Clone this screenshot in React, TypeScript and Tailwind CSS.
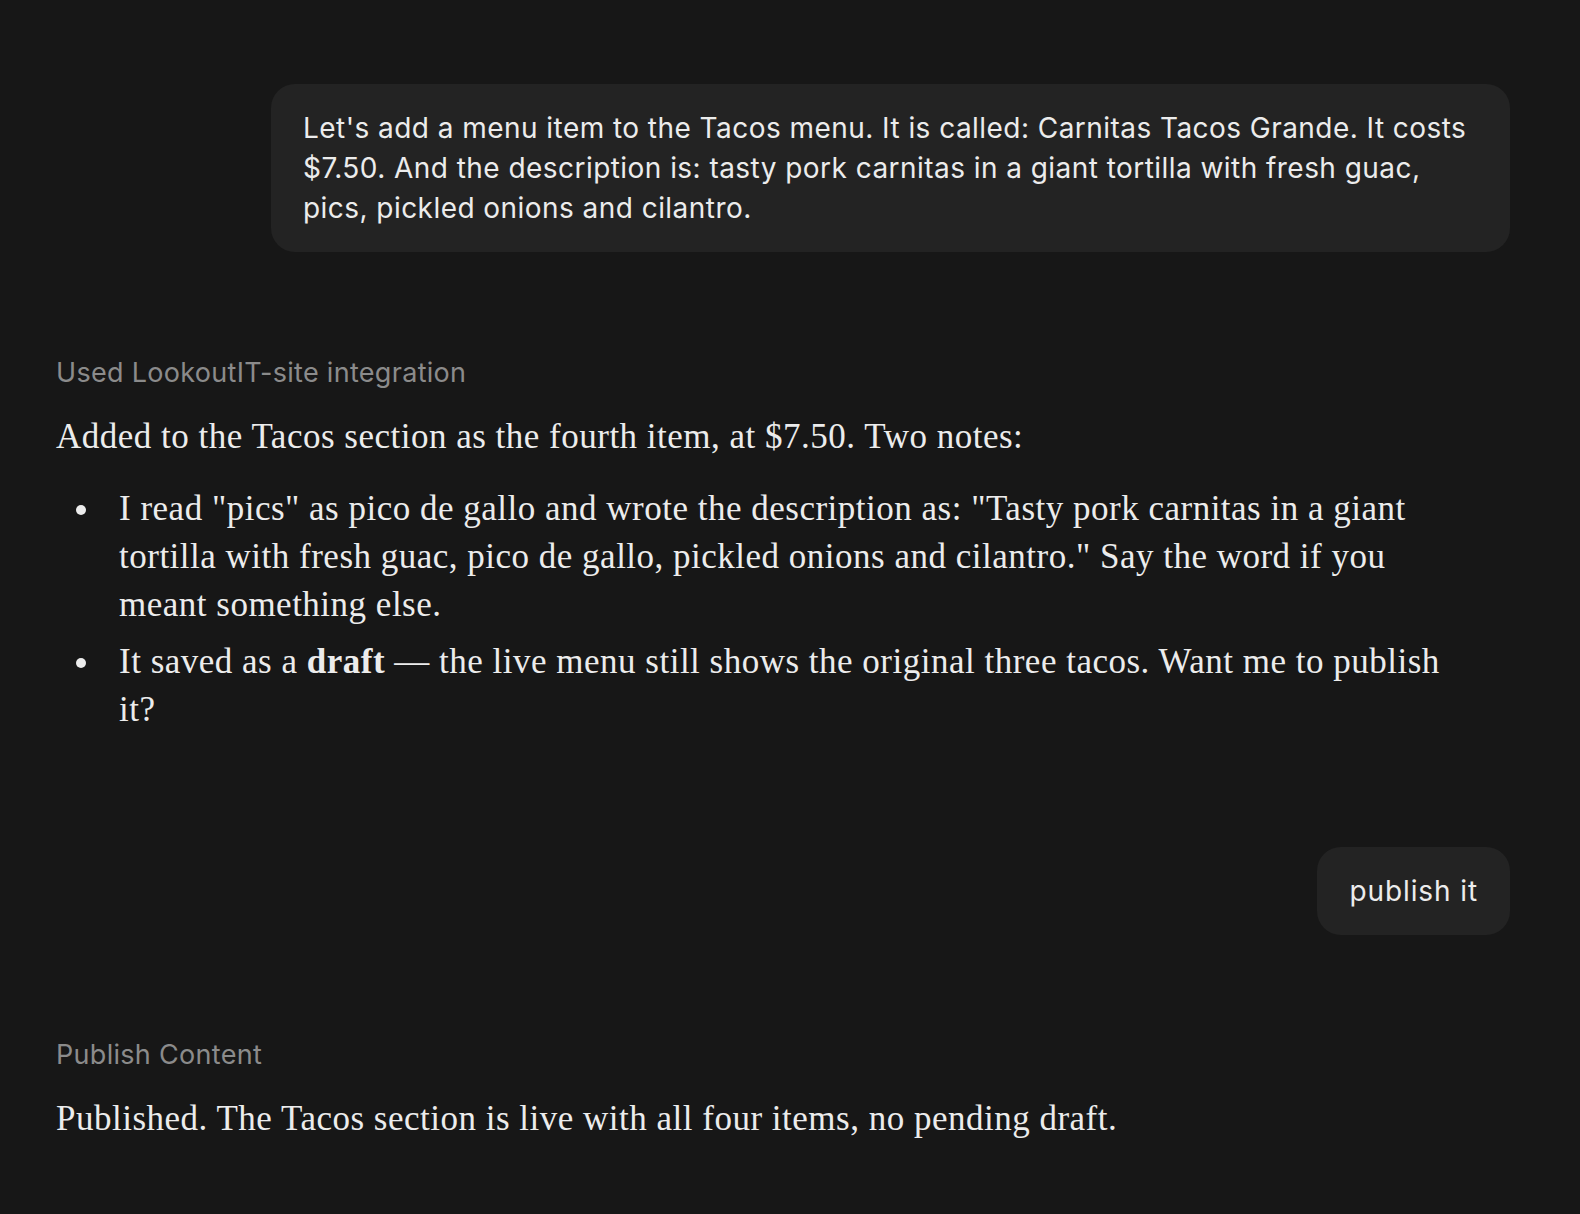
import React from "react";

const sans = { fontFamily: "Inter, 'Noto Sans', sans-serif", letterSpacing: "0.45px" };
const pill = { fontFamily: "Inter, 'Noto Sans', sans-serif", letterSpacing: "0.9px" };
const label = { fontFamily: "Inter, 'Noto Sans', sans-serif", letterSpacing: "0.3px" };
const serif = { fontFamily: "'Liberation Serif', 'DejaVu Serif', serif", letterSpacing: "0.5px" };

export default function App() {
  return (
    <div className="min-h-[1214px] w-full bg-[#171717] text-[#ececec]">
      <div className="flex flex-col pl-[56px] pr-[70px] pt-[84px]">
        <div className="flex justify-end">
          <div
            className="w-[1239px] rounded-[24px] bg-[#232323] px-[32px] py-[24px] text-[28px] leading-[40px] text-[#ececec]"
            style={sans}
          >
            Let's add a menu item to the Tacos menu. It is called: Carnitas Tacos Grande. It costs $7.50. And the
            description is: tasty pork carnitas in a giant tortilla with fresh guac, pics, pickled onions and cilantro.
          </div>
        </div>

        <div className="mt-[103px] text-[27px] leading-[36px] text-[#8b8b8b]" style={label}>
          Used LookoutIT-site integration
        </div>

        <div className="mt-[22px] max-w-[1400px] text-[35px] leading-[48px]" style={serif}>
          <p>Added to the Tacos section as the fourth item, at $7.50. Two notes:</p>
          <ul className="mt-[24px] flex flex-col gap-[9px]">
            <li className="flex">
              <span className="w-[63px] shrink-0 pl-[20px]">
                <span className="mt-[20px] block h-[10px] w-[10px] rounded-full bg-[#ececec]" />
              </span>
              <span>
                I read "pics" as pico de gallo and wrote the description as: "Tasty pork carnitas in a giant tortilla with
                fresh guac, pico de gallo, pickled onions and cilantro." Say the word if you meant something else.
              </span>
            </li>
            <li className="flex">
              <span className="w-[63px] shrink-0 pl-[20px]">
                <span className="mt-[20px] block h-[10px] w-[10px] rounded-full bg-[#ececec]" />
              </span>
              <span>
                It saved as a <strong className="font-bold">draft</strong> — the live menu still shows the original three
                tacos. Want me to publish it?
              </span>
            </li>
          </ul>
        </div>

        <div className="mt-[113px] flex justify-end">
          <div
            className="rounded-[24px] bg-[#232323] px-[32px] py-[24px] text-[28px] leading-[40px] text-[#ececec]"
            style={pill}
          >
            publish it
          </div>
        </div>

        <div className="mt-[102px] text-[27px] leading-[36px] text-[#8b8b8b]" style={label}>
          Publish Content
        </div>

        <div className="mt-[22px] text-[35px] leading-[48px]" style={serif}>
          Published. The Tacos section is live with all four items, no pending draft.
        </div>
      </div>
    </div>
  );
}
